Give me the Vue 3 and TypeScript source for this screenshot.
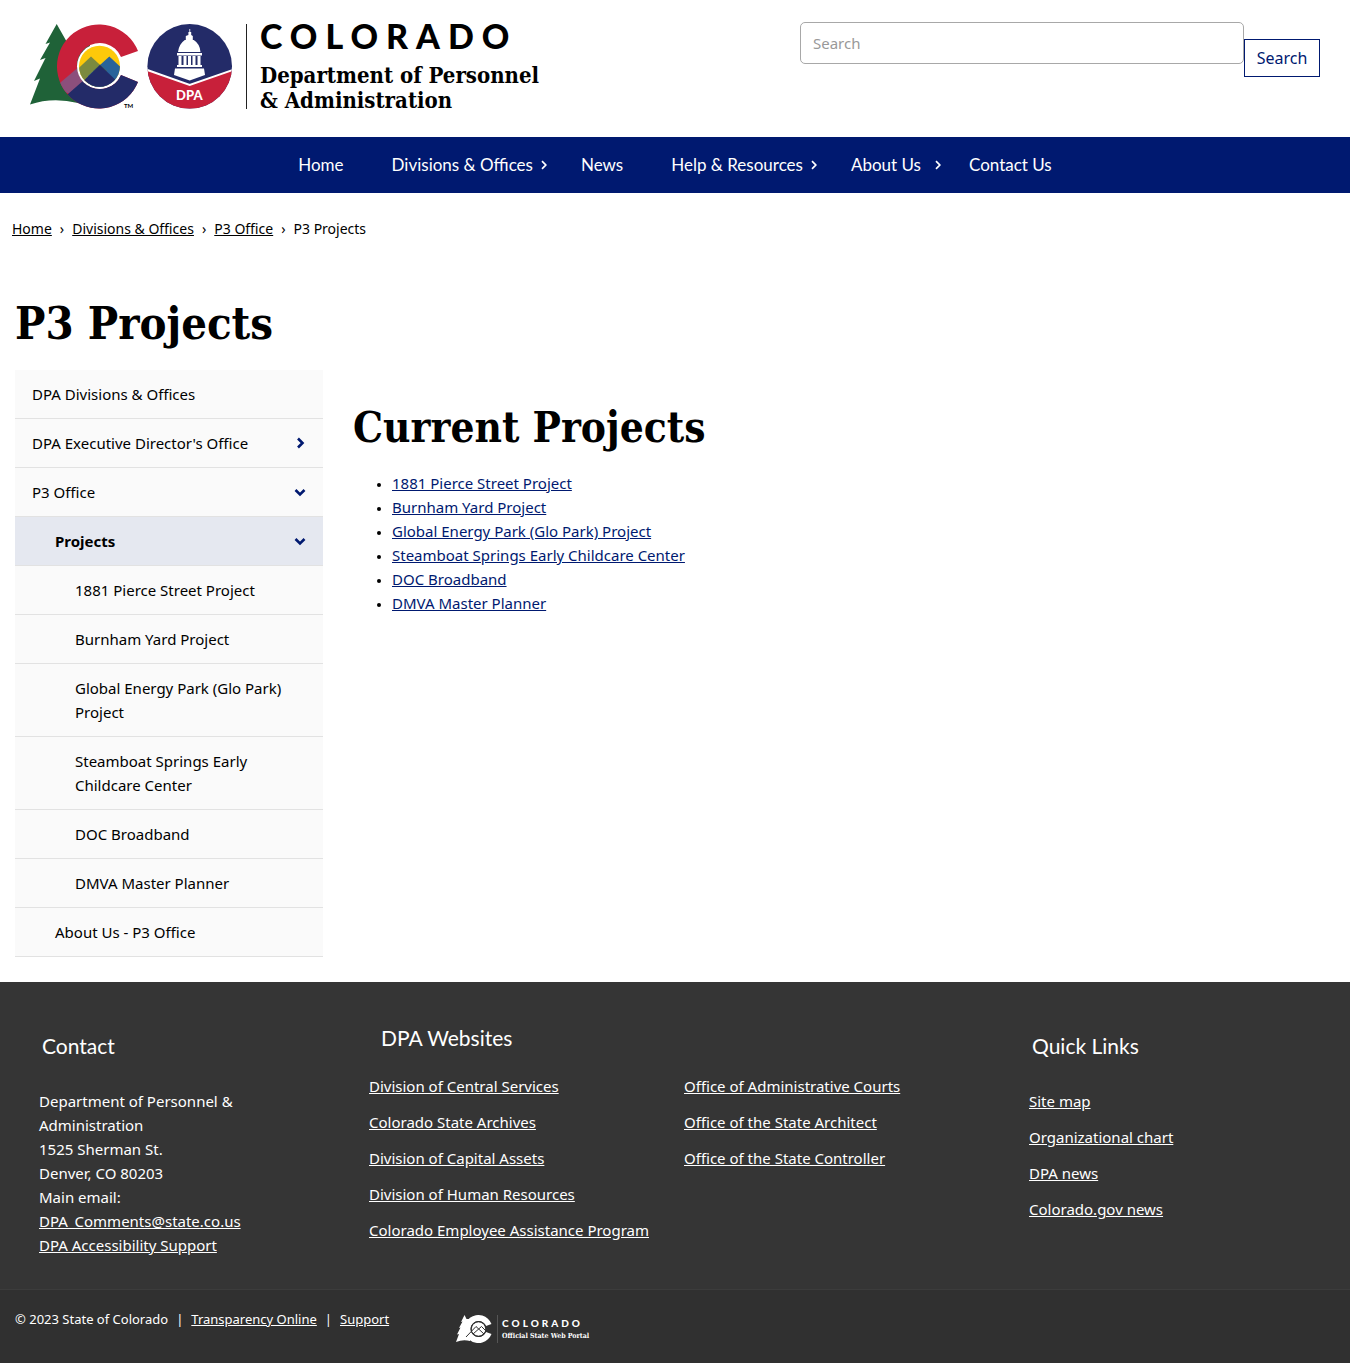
<script setup lang="ts">
interface NavItem {
  label: string
  menu?: boolean
  wide?: boolean
}
interface SideItem {
  label: string
  level: 1 | 2 | 3
  state?: 'closed' | 'open'
  active?: boolean
}

const navItems: NavItem[] = [
  { label: 'Home' },
  { label: 'Divisions & Offices', menu: true },
  { label: 'News' },
  { label: 'Help & Resources', menu: true },
  { label: 'About Us', menu: true, wide: true },
  { label: 'Contact Us' },
]

const crumbs: string[] = ['Home', 'Divisions & Offices', 'P3 Office']

const sideItems: SideItem[] = [
  { label: 'DPA Divisions & Offices', level: 1 },
  { label: "DPA Executive Director's Office", level: 1, state: 'closed' },
  { label: 'P3 Office', level: 1, state: 'open' },
  { label: 'Projects', level: 2, state: 'open', active: true },
  { label: '1881 Pierce Street Project', level: 3 },
  { label: 'Burnham Yard Project', level: 3 },
  { label: 'Global Energy Park (Glo Park) Project', level: 3 },
  { label: 'Steamboat Springs Early Childcare Center', level: 3 },
  { label: 'DOC Broadband', level: 3 },
  { label: 'DMVA Master Planner', level: 3 },
  { label: 'About Us - P3 Office', level: 2 },
]

const projects: string[] = [
  '1881 Pierce Street Project',
  'Burnham Yard Project',
  'Global Energy Park (Glo Park) Project',
  'Steamboat Springs Early Childcare Center',
  'DOC Broadband',
  'DMVA Master Planner',
]

const divisions: string[] = [
  'Division of Central Services',
  'Colorado State Archives',
  'Division of Capital Assets',
  'Division of Human Resources',
  'Colorado Employee Assistance Program',
]
const offices: string[] = [
  'Office of Administrative Courts',
  'Office of the State Architect',
  'Office of the State Controller',
]
const quickLinks: string[] = ['Site map', 'Organizational chart', 'DPA news', 'Colorado.gov news']
</script>

<template>
  <div class="page">
    <header class="masthead">
      <a class="brand" href="#" aria-label="Colorado Department of Personnel and Administration">
        <svg class="brand-mark" width="204" height="86" viewBox="0 0 204 86" aria-hidden="true">
          <defs>
            <clipPath id="c-shape">
              <path d="M108 27 A42 42 0 1 0 108 58 L91 51 A23 23 0 1 1 91 33 Z" />
            </clipPath>
            <clipPath id="c-disc"><circle cx="69.5" cy="42.3" r="20.5" /></clipPath>
            <clipPath id="seal"><circle cx="159.7" cy="42.3" r="42.3" /></clipPath>
          </defs>
          <path
            d="M26.7 0 L15.5 20 L20 18.6 L10 36 L15.5 34 L4 57 L10 54.5 L0 80.6 Q22 73 48 79 L60 70 L60 20 L38 20 Z"
            fill="#1f6238"
          />
          <g clip-path="url(#c-shape)">
            <rect x="26" y="0" width="86" height="86" fill="#c8203a" />
            <path d="M24 64 L60.7 32.7 L70 42 L40 70 Z" fill="#8c4f7c" />
            <path d="M30 77 L70 42 L92 50 L112 55 L112 88 L34 88 Z" fill="#232b68" />
          </g>
          <circle cx="69.5" cy="42.3" r="22.5" fill="#fff" />
          <g clip-path="url(#c-disc)">
            <rect x="48" y="20" width="44" height="44" fill="#fdc90a" />
            <path d="M40 52 L61 32.5 L82 52 L70 66 H40 Z" fill="#7b8a3f" />
            <path d="M58 52 L79.3 32.5 L96 48 V66 H58 Z" fill="#29639a" />
            <path d="M63 47 L70 40.6 L77 47 L70 53 Z" fill="#4a6b54" />
            <path d="M42 68 L70 41 L98 68 V70 H42 Z" fill="#232b68" />
          </g>
          <text x="94" y="84" font-size="6" font-weight="700">TM</text>
          <g clip-path="url(#seal)">
            <rect x="117" y="0" width="86" height="86" fill="#232b68" />
            <path d="M116 45.5 L159.7 61 L204 45.5 V86 H116 Z" fill="#c8203a" />
            <path d="M116 45.5 L159.7 61 L204 45.5" fill="none" stroke="#fff" stroke-width="2" />
          </g>
          <g fill="#fff">
            <path d="M158.4 8 h1 v-3 h.8 v3 h1 v3 l1.6 1 v4 h1 Q170 20 170.5 28 H148 Q149 20 154.800 16 h1 v-4 l2.600 -1 Z" />
            <rect x="147" y="29" width="25" height="2.500" />
            <path d="M148.500 32 h3 v9 h-3 Z M153.500 32 h3 v9 h-3 Z M158 32 h3 v9 h-3 Z M162.500 32 h3 v9 h-3 Z M167.500 32 h3 v9 h-3 Z" />
            <rect x="147" y="41" width="25" height="2" />
            <path d="M145 44.500 H174 L175 51 L159.700 56.500 L144 51 Z" />
          </g>
          <text x="146" y="76" font-size="13" font-weight="900" fill="#fff">DPA</text>
        </svg>
        <span class="brand-text">
          <span class="brand-state">COLORADO</span>
          <span class="brand-dept">Department of Personnel<br />&amp; Administration</span>
        </span>
      </a>
      <form class="search" role="search" @submit.prevent>
        <input type="search" aria-label="Search" placeholder="Search" />
        <button type="submit">Search</button>
      </form>
    </header>

    <nav class="mainnav" aria-label="Main">
      <ul>
        <li v-for="item in navItems" :key="item.label" :class="{ menu: item.menu }">
          <a href="#">{{ item.label }}</a>
          <span v-if="item.menu" class="caret" :class="{ wide: item.wide }">
            <svg width="6" height="10" viewBox="0 0 6 10" aria-hidden="true">
              <path d="M1 1.200 L4.800 5 L1 8.800" fill="none" stroke="#fff" stroke-width="1.700" />
            </svg>
          </span>
        </li>
      </ul>
    </nav>

    <nav class="crumbs" aria-label="Breadcrumb">
      <template v-for="crumb in crumbs" :key="crumb">
        <a href="#">{{ crumb }}</a><span class="sep">›</span>
      </template>
      <span>P3 Projects</span>
    </nav>

    <main>
      <h1>P3 Projects</h1>
      <div class="columns">
        <nav class="side" aria-label="Section">
          <ul>
            <li v-for="item in sideItems" :key="item.label" :class="['level' + item.level, { active: item.active }]">
              <a href="#">{{ item.label }}</a>
              <svg
                v-if="item.state"
                :class="['arrow', item.state]"
                width="12"
                height="12"
                viewBox="0 0 12 12"
                aria-hidden="true"
              >
                <path d="M1.500 4 L6 8.500 L10.500 4" fill="none" stroke="#001970" stroke-width="2.600" />
              </svg>
            </li>
          </ul>
        </nav>
        <section class="content">
          <h2>Current Projects</h2>
          <ul>
            <li v-for="project in projects" :key="project"><a href="#">{{ project }}</a></li>
          </ul>
        </section>
      </div>
    </main>

    <footer>
      <div class="foot-main">
        <section class="foot-side">
          <h2>Contact</h2>
          <address>
            Department of Personnel &amp; Administration<br />
            1525 Sherman St.<br />
            Denver, CO 80203<br />
            Main email:<br />
            <a href="#">DPA_Comments@state.co.us</a><br />
            <a href="#">DPA Accessibility Support</a>
          </address>
        </section>
        <section class="foot-mid">
          <h2>DPA Websites</h2>
          <div class="foot-lists">
            <ul>
              <li v-for="link in divisions" :key="link"><a href="#">{{ link }}</a></li>
            </ul>
            <ul>
              <li v-for="link in offices" :key="link"><a href="#">{{ link }}</a></li>
            </ul>
          </div>
        </section>
        <section class="foot-side">
          <h2>Quick Links</h2>
          <ul>
            <li v-for="link in quickLinks" :key="link"><a href="#">{{ link }}</a></li>
          </ul>
        </section>
      </div>
      <div class="foot-bar">
        <p>
          © 2023 State of Colorado<span class="bar">|</span><a href="#">Transparency Online</a><span class="bar">|</span><a href="#">Support</a>
        </p>
        <a class="portal" href="#" aria-label="Colorado Official State Web Portal">
          <svg width="36" height="28" viewBox="0 0 36 28" aria-hidden="true">
            <path d="M8.500 0 L5 7 L6.500 6.500 L3 13 L4.500 12.500 L1 19.500 L3 19 L0 27 Q7 24 14 26 V4 L10.500 4 Z" fill="#fff" />
            <path d="M35.500 9 A14 14 0 1 0 35.500 19 L30 17 A8 8 0 1 1 30 11 Z" fill="#fff" />
            <circle cx="22.500" cy="14" r="6.800" fill="#fff" />
            <circle cx="22.500" cy="14" r="7.500" fill="none" stroke="#303030" />
            <path d="M10 22 L20 11.500 L28 19 M17 19 L25.500 11.500 L30 16" fill="none" stroke="#303030" />
          </svg>
          <span class="portal-text">
            <span class="portal-state">COLORADO</span>
            <span class="portal-name">Official State Web Portal</span>
          </span>
        </a>
      </div>
    </footer>
  </div>
</template>

<style>
body {
  margin: 0;
}
</style>

<style scoped>
.page {
  font: 15px/24px "Noto Sans", "Open Sans", sans-serif;
  color: #000;
  background: #fff;
}
.page * {
  box-sizing: border-box;
}
ul {
  list-style: none;
  margin: 0;
  padding: 0;
}
h1,
h2,
p {
  margin: 0;
}
svg {
  flex: none;
}

.masthead {
  display: flex;
  justify-content: space-between;
  align-items: flex-start;
  gap: 32px;
  min-height: 137px;
  padding: 22px 30px 0;
}
.brand {
  display: flex;
  gap: 12px;
  padding-top: 2px;
  color: #000;
  text-decoration: none;
}
.brand-mark {
  font-family: Lato, sans-serif;
}
.brand-text {
  display: flex;
  flex-direction: column;
  height: 85px;
  padding-left: 13px;
  border-left: 1px solid #222;
  white-space: nowrap;
}
.brand-state {
  font: 900 34px/24px Lato, sans-serif;
  letter-spacing: 8px;
}
.brand-dept {
  padding-top: 15px;
  font: 700 22px/25px "DejaVu Serif Condensed", "DejaVu Serif", serif;
}
.search {
  display: flex;
  align-items: flex-start;
  flex: 0 1 520px;
}
.search input {
  flex: 1;
  min-width: 0;
  height: 42px;
  padding: 0 12px;
  border: 1px solid #a8a8a8;
  border-radius: 5px;
  font: 15px/24px "Noto Sans", "Open Sans", sans-serif;
  background: #fff;
}
.search input::placeholder {
  color: #999;
}
.search button {
  width: 76px;
  height: 38px;
  margin-top: 17px;
  padding: 0;
  border: 1px solid #001970;
  background: #fff;
  color: #001970;
  font: 16px/24px "Noto Sans", "Open Sans", sans-serif;
}

.mainnav {
  background: #001970;
}
.mainnav ul {
  display: flex;
  justify-content: center;
  padding: 16px 0;
}
.mainnav li {
  display: flex;
  align-items: center;
  padding: 0 24px;
}
.mainnav .menu {
  padding-right: 0;
}
.mainnav a {
  color: #fff;
  text-decoration: none;
  font: 17px/24px Lato, sans-serif;
}
.caret {
  display: flex;
  width: 24px;
  padding-left: 8px;
}
.caret.wide {
  padding-left: 14px;
}

.crumbs {
  display: flex;
  padding: 24px 12px 0;
  font-size: 14px;
}
.crumbs a {
  color: inherit;
}
.sep {
  padding: 0 8px;
}

main {
  padding: 51px 15px 25px;
}
h1,
.content h2 {
  font-family: "DejaVu Serif Condensed", "DejaVu Serif", serif;
  font-weight: 700;
}
h1 {
  padding-bottom: 14px;
  font-size: 45px;
  line-height: 64px;
}
.columns {
  display: flex;
  gap: 30px;
}
.side {
  flex: 0 0 308px;
}
.side li {
  display: flex;
  align-items: center;
  justify-content: space-between;
  padding: 12px 17px;
  border-bottom: 1px solid #e2e2e2;
  background: #fafafa;
}
.side .level2 {
  padding-left: 40px;
}
.side .level3 {
  padding-left: 60px;
}
.side .active {
  background: #e5e8f0;
  font-weight: 700;
}
.side a {
  color: #000;
  text-decoration: none;
}
.arrow.closed {
  transform: rotate(-90deg);
}
.content {
  flex: 1;
  padding-top: 26px;
}
.content h2 {
  padding-bottom: 11px;
  font-size: 42px;
  line-height: 64px;
}
.content ul {
  padding-left: 39px;
  list-style: disc;
}
.content li::marker {
  font-size: 12px;
}
.content a {
  color: #001970;
}

footer {
  color: #fff;
  background: #353535;
}
footer a {
  color: #fff;
}
footer h2 {
  font: 21px/24px Lato, sans-serif;
}
.foot-main {
  display: grid;
  grid-template-columns: 1fr 2fr 1fr;
  padding: 44px 15px 32px;
}
.foot-side {
  padding: 8px 72px 0 24px;
}
.foot-side h2 {
  padding: 0 0 31px 3px;
}
.foot-mid {
  padding: 0 6px 0 24px;
}
.foot-mid h2 {
  padding: 0 0 24px 12px;
}
.foot-lists {
  display: grid;
  grid-template-columns: 1fr 1fr;
}
.foot-main li {
  padding-bottom: 12px;
  white-space: nowrap;
}
address {
  font-style: normal;
}
.foot-bar {
  display: flex;
  align-items: flex-start;
  gap: 67px;
  min-height: 74px;
  padding: 17px 15px;
  border-top: 1px solid #3c3c3c;
  background: #303030;
  font-size: 13px;
}
.bar {
  padding: 0 8px;
}
.portal {
  display: flex;
  gap: 5px;
  padding-top: 8px;
  text-decoration: none;
}
.portal-text {
  display: flex;
  flex-direction: column;
  gap: 4px;
  padding: 4px 0 0 4px;
  border-left: 1px solid #555;
}
.portal-state {
  font: 900 10px/8px Lato, sans-serif;
  letter-spacing: 3px;
}
.portal-name {
  font: 700 7px/10px "DejaVu Serif Condensed", "DejaVu Serif", serif;
}
</style>
